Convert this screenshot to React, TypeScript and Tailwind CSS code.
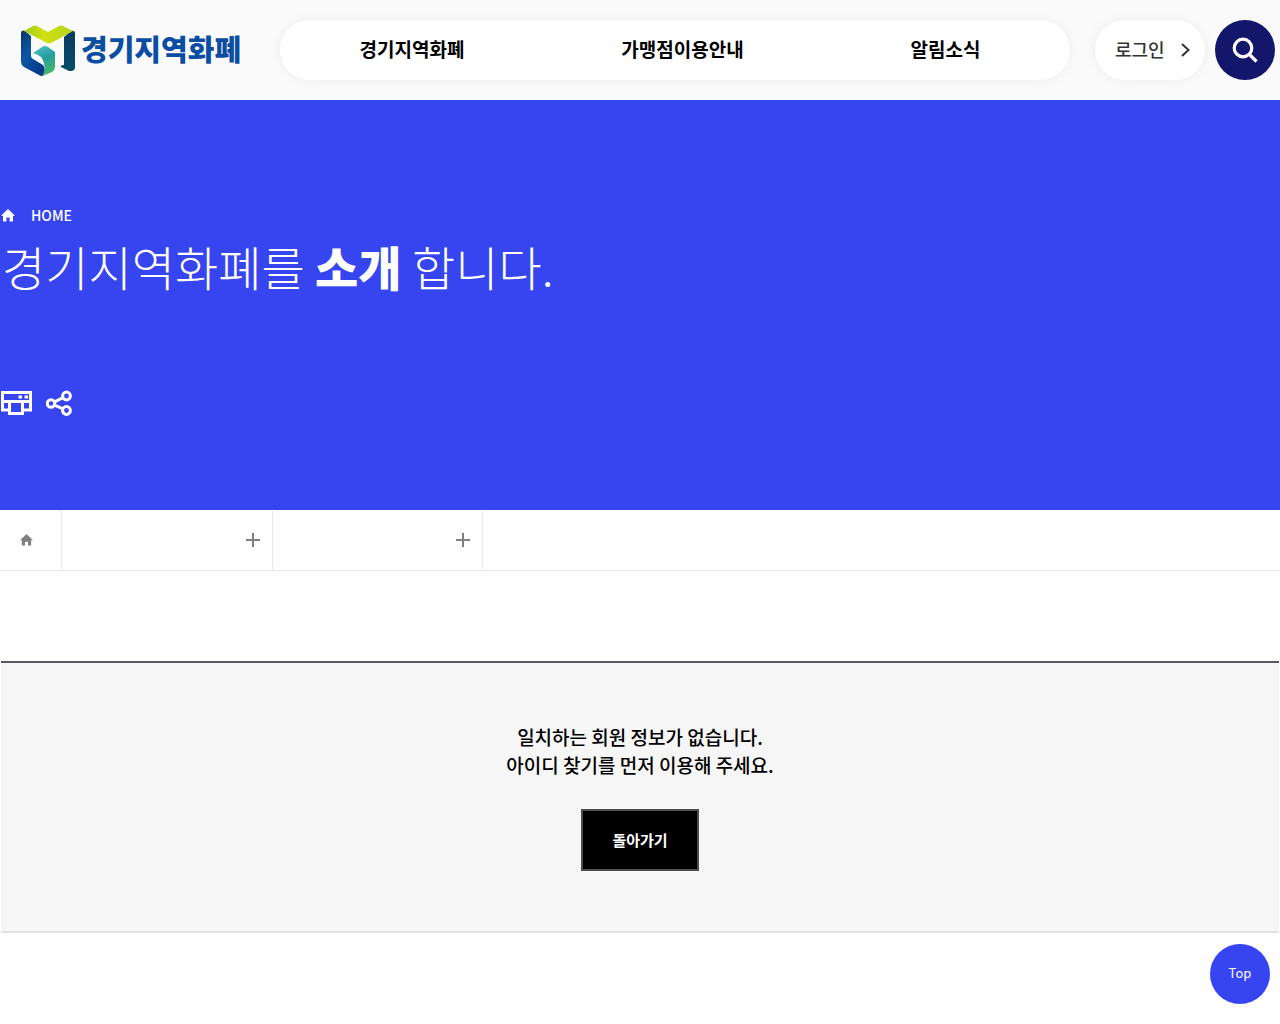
import type { ReactNode } from "react";

const menus = ["경기지역화폐", "가맹점이용안내", "알림소식"];

function HomeIcon({ className }: { className: string }) {
  return (
    <svg viewBox="0 0 14 13" className={className} fill="currentColor" aria-hidden="true">
      <path d="M7 0 14 6.8H12V12.5H8.6V8.4H5.4V12.5H2V6.8H0Z" />
    </svg>
  );
}

function LogoMark() {
  return (
    <svg viewBox="0 0 56 52" className="h-[52px] w-14" aria-hidden="true">
      <defs>
        <linearGradient id="lime" x1="0" y1="0" x2="1" y2="0">
          <stop offset="0" stopColor="#9ccb1c" />
          <stop offset="0.4" stopColor="#d2e010" />
          <stop offset="1" stopColor="#b4d51c" />
        </linearGradient>
        <linearGradient id="navy" x1="0" y1="0" x2="0.6" y2="1">
          <stop offset="0" stopColor="#0a3567" />
          <stop offset="0.5" stopColor="#0d56a8" />
          <stop offset="1" stopColor="#06388c" />
        </linearGradient>
        <linearGradient id="teal" x1="0" y1="0" x2="0.3" y2="1">
          <stop offset="0" stopColor="#55c5d2" />
          <stop offset="0.5" stopColor="#239f9d" />
          <stop offset="1" stopColor="#45b56c" />
        </linearGradient>
        <linearGradient id="deep" x1="0" y1="0" x2="0" y2="1">
          <stop offset="0" stopColor="#093b5d" />
          <stop offset="1" stopColor="#064c68" />
        </linearGradient>
      </defs>
      <path d="M1 10Q1 5 5 7L11 12V32Q11 34 13 35L23 41Q26 44 24 51Q22 53 19 51L4 43Q1 41 1 38Z" fill="url(#navy)" />
      <path d="M13 29 22 23Q25 21 28 23L35 28V43Q35 46 32 48L22 52Q26 47 24 39Q22 31 13 29Z" fill="url(#teal)" />
      <path d="M44 13 51 7Q55 6 55 10V44Q55 46 52 47L49 47 41 43Q40 41 44 41Z" fill="url(#deep)" />
      <path d="M4 7 13 2Q15 1 17 2L28 8 39 2Q41 1 43 2L53 7 33 18Q30 20 27 19Z" fill="url(#lime)" />
    </svg>
  );
}

function PathCell({ label, className }: { label: string; className: string }) {
  return (
    <li className={`h-[58px] border-r border-[#e8e8ec] ${className}`}>
      <button type="button" aria-label={label} className="flex h-full w-full items-center justify-end pr-3 text-[#808080]">
        <svg viewBox="0 0 14 14" className="size-3.5" stroke="currentColor" strokeWidth="2" aria-hidden="true">
          <path d="M7 0V14M0 7H14" />
        </svg>
      </button>
    </li>
  );
}

function Tool({ label, children }: { label: string; children: ReactNode }) {
  return <button type="button" aria-label={label} className="text-white">{children}</button>;
}

export default function App() {
  return (
    <div className="min-h-screen bg-[#fefefe] font-['Noto_Sans_CJK_KR',sans-serif] text-black">
      <header className="flex h-[100px] items-center bg-[#fafafa] pr-[5px]">
        <a href="#" className="flex w-[280px] shrink-0 items-center gap-[5px] pl-5">
          <LogoMark />
          <span className="pb-1 whitespace-nowrap text-[29px] leading-[48px] font-black text-[#0b4da2]">경기지역화폐</span>
        </a>
        <nav className="h-[60px] flex-1 rounded-full bg-white shadow-[0_0_12px_rgba(0,0,0,0.06)]">
          <ul className="grid h-full grid-cols-[264fr_277fr_249fr] items-center pb-0.5 text-center text-[19px] font-bold">
            {menus.map((m) => (
              <li key={m}><a href="#">{m}</a></li>
            ))}
          </ul>
        </nav>
        <a href="#" className="ml-[25px] flex h-[60px] w-[110px] items-center justify-between rounded-full bg-white pr-[14px] pl-5 text-lg font-medium text-[#333] shadow-[0_0_12px_rgba(0,0,0,0.06)]">
          <span className="pb-0.5">로그인</span>
          <svg viewBox="0 0 10 14" className="h-3.5 w-2.5" fill="none" stroke="currentColor" strokeWidth="2" aria-hidden="true">
            <path d="M1 1 7.5 7 1 13" />
          </svg>
        </a>
        <button type="button" aria-label="검색" className="ml-2.5 flex size-[60px] items-center justify-center rounded-full bg-[#14166b] text-white">
          <svg viewBox="0 0 26 26" className="size-[26px]" fill="none" stroke="currentColor" strokeWidth="3.2" aria-hidden="true">
            <circle cx="11" cy="11" r="8.8" />
            <path d="M17 17 24.5 24.5" />
          </svg>
        </button>
      </header>

      <section className="flex h-[410px] flex-col items-start bg-[#3645f0] pt-[105px] text-white">
        <a href="#" className="flex items-center gap-4 pl-px text-sm leading-5 font-medium">
          <HomeIcon className="h-[13px] w-3.5" />
          HOME
        </a>
        <h1 className="mt-1.5 pl-0.5 text-[47px] leading-[70px] font-light">
          경기지역화폐를 <strong className="font-black">소개</strong> 합니다.
        </h1>
        <div className="mt-[89px] flex items-center gap-3.5">
          <Tool label="인쇄">
            <svg viewBox="0 0 32 26" className="h-[26px] w-8" fill="none" stroke="currentColor" strokeWidth="3" aria-hidden="true">
              <path d="M8 20H2.5V2.5H30.5V20H24M2 11.5H31M9.5 12V23.5H22.5V12" />
              <path d="M18.5 7H22M24.5 7H28" />
            </svg>
          </Tool>
          <Tool label="공유">
            <svg viewBox="0 0 26 26" className="size-[26px]" fill="none" stroke="currentColor" strokeWidth="3" aria-hidden="true">
              <circle cx="5" cy="13.5" r="3.7" />
              <circle cx="20.5" cy="6" r="3.9" />
              <circle cx="20.5" cy="20.5" r="3.9" />
              <path d="M8.5 11.8 17 7.7M8.5 15.2 17 18.8" />
            </svg>
          </Tool>
        </div>
      </section>

      <ul className="flex h-[61px] items-center border-b border-[#e8e8e8]">
        <li className="h-full w-[62px] border-r border-[#e8e8ec]">
          <a href="#" aria-label="홈" className="flex h-full items-center pl-5 text-[#808080]">
            <HomeIcon className="h-3 w-[13px]" />
          </a>
        </li>
        <PathCell label="1차 메뉴 열기" className="w-[211px]" />
        <PathCell label="2차 메뉴 열기" className="w-[210px]" />
      </ul>

      <main className="px-px pt-[90px]">
        <div className="flex flex-col items-center border-t-2 border-b-2 border-t-[#5a5a60] border-b-[#e2e2e2] bg-[#f6f6f6] py-[60px]">
          <p className="text-center text-[19px] leading-7 font-medium">
            일치하는 회원 정보가 없습니다.
            <br />
            아이디 찾기를 먼저 이용해 주세요.
          </p>
          <button type="button" className="mt-[30px] h-[62px] w-[118px] border-2 border-[#4c4c4c] bg-black text-[15px] font-bold text-white">
            돌아가기
          </button>
        </div>
      </main>

      <a href="#" className="fixed right-2.5 bottom-5 flex size-[60px] items-center justify-center rounded-full bg-[#3645f0] pb-0.5 text-[13px] text-white">
        Top
      </a>
    </div>
  );
}
